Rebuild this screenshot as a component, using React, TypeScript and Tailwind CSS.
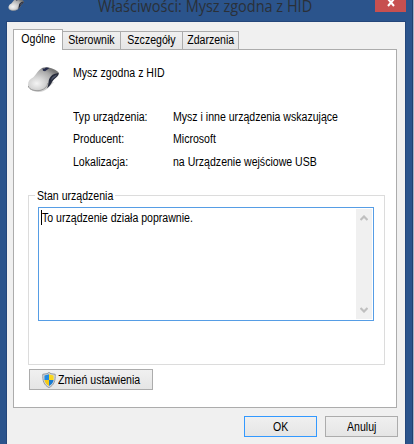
import React from 'react';

const tabs = [
  { name: 'Sterownik', className: 'w-[58px]' },
  { name: 'Szczegóły', className: 'w-[62px]' },
  { name: 'Zdarzenia', className: 'w-[56px]' },
];

const details = [
  { label: 'Typ urządzenia:', value: 'Mysz i inne urządzenia wskazujące', className: 'h-[22px]' },
  { label: 'Producent:', value: 'Microsoft', className: 'h-[23px]' },
  { label: 'Lokalizacja:', value: 'na Urządzenie wejściowe USB', className: 'h-[22px]' },
];

const MouseIcon = ({ className }: { className?: string }) => (
  <svg viewBox="0 0 34 28" className={className}>
    <defs>
      <radialGradient id="mouseBody" cx="0.28" cy="0.68" r="0.75">
        <stop offset="0" stopColor="#f4f4f4" />
        <stop offset="0.35" stopColor="#d4d4d4" />
        <stop offset="0.75" stopColor="#a9a9a9" />
        <stop offset="1" stopColor="#777" />
      </radialGradient>
    </defs>
    <path d="M3 24C8 28 15 28 20 24L27 17L16 18Z" fill="#777" opacity="0.35" />
    <path d="M1 20C1 16 3 14 6 12.5C9 10 11 5 15 3C20 1 29 4 32 8C32 12 27 13 25 17C23 22 18 26 10 26C5 26 1 24 1 20Z" fill="url(#mouseBody)" />
    <path d="M1.3 21C2 25 9 26.5 14 25.2C18 24 20.5 21 20.8 18" fill="none" stroke="#8f8f8f" strokeWidth="0.8" />
    <path d="M31.5 8C31.5 12 27 13 25 17C24 19.5 22 22 20 23.2C22.5 18 20.5 15 24 11.2C26 9 28.5 8.5 31.5 8Z" fill="#262b3b" />
    <path d="M27 11L30 9.5C29 12 26 13 24.5 15.5C23.8 14 25 12 27 11Z" fill="#535a6d" />
    <path d="M15.5 3.2L17.2 3.8L19 2.6L22.5 3L18 6.2L16 5.8Z" fill="#252b4b" />
  </svg>
);

const ShieldIcon = () => (
  <svg viewBox="0 0 14 16" className="w-[14px] h-4 shrink-0">
    <path d="M7 .5L9 1.7L13.2 2.3C13.5 8.5 12.2 13 7 15.6C1.8 13 .5 8.5 .8 2.3L5 1.7Z" fill="#d7dadd" stroke="#92979c" />
    <path d="M7 2.2L2.4 3.6V8H7Z" fill="#238ae0" />
    <path d="M7 2.2L11.6 3.6V8H7Z" fill="#f9d71c" />
    <path d="M2.4 8H7V14C4.2 12.5 2.8 10.7 2.4 8Z" fill="#f4ca16" />
    <path d="M7 8H11.6C11.2 10.7 9.8 12.5 7 14Z" fill="#187bd2" />
  </svg>
);

const Chevron = ({ className }: { className?: string }) => (
  <svg viewBox="0 0 8 6" className={`w-2 h-1.5 ${className ?? ''}`}>
    <path d="M.5 5L4 1.5L7.5 5" fill="none" stroke="#bfbfbf" strokeWidth="2.2" />
  </svg>
);

// Condensed dialog text
const Label = ({ children, center }: { children: React.ReactNode; center?: boolean }) => (
  <span className={`inline-block whitespace-nowrap scale-x-[0.88] ${center ? 'origin-center' : 'origin-left'}`}>{children}</span>
);

const App: React.FC = () => {
  return (
    <div className="w-[414px] h-[444px] overflow-hidden flex bg-[#a3b2c9] font-['Liberation_Sans',Arial,sans-serif] text-xs text-black">
      <div className="w-[413px] h-full flex flex-col bg-[#2b548c] border-r border-[#20406e]">
        {/* Title bar */}
        <div className="h-[21px] shrink-0 flex items-start relative">
          <MouseIcon className="w-[17px] h-[15px] ml-[8px] -mt-[3px]" />
          <h1 className="ml-[73px] leading-[13px] text-[15.5px] origin-left scale-x-[0.935] text-[#2a3038] whitespace-nowrap font-['Open_Sans','Noto_Sans',sans-serif]">
            Właściwości: Mysz zgodna z HID
          </h1>
          <button className="absolute left-[375px] top-0 w-[31px] h-3 bg-[#c75050] flex justify-center">
            <svg viewBox="0 0 8 7" className="w-2 h-[7px]">
              <path d="M1 -1L7 6M7 -1L1 6" stroke="white" strokeWidth="2" />
            </svg>
          </button>
        </div>

        {/* Dialog body */}
        <div className="ml-[6px] w-[400px] h-[423px] bg-[#f0f0f0] border border-b-0 border-[#24467a] px-[6px] pt-[7px]">
          <div className="flex items-end h-5">
            <button className="w-[50px] h-[21px] -mb-px z-10 bg-white border border-b-0 border-[#acacac] pb-[2px]"><Label center>Ogólne</Label></button>
            <div className="flex h-[18px]">
              {tabs.map((tab) => (
                <button key={tab.name} className={`${tab.className} h-[18px] flex justify-center border border-l-0 border-b-0 border-[#acacac] bg-linear-to-b from-[#f0f0f0] to-[#e5e5e5]`}>
                  <Label center>{tab.name}</Label>
                </button>
              ))}
            </div>
          </div>

          <div className="w-[384px] h-[359px] bg-white border border-[#acacac] px-[14px] flex flex-col items-start">
            <div className="h-[56px] flex items-start pt-[15px]">
              <MouseIcon className="w-[34px] h-[28px] -ml-px" />
              <p className="ml-[12px] leading-4"><Label>Mysz zgodna z HID</Label></p>
            </div>
            <div className="pl-[45px] pt-[3px] h-[89px]">
              {details.map((row) => (
                <div key={row.label} className={`flex leading-4 ${row.className}`}>
                  <div className="w-[100px]"><Label>{row.label}</Label></div>
                  <Label>{row.value}</Label>
                </div>
              ))}
            </div>

            <div className="w-[357px] h-[170px] border border-[#dcdcdc] flex flex-col items-start">
              <div className="h-[11px]">
                <div className="w-[80px] ml-[6px] -mt-[8px] px-[2px] bg-white leading-4"><Label>Stan urządzenia</Label></div>
              </div>
              <div className="ml-[9px] w-[336px] h-[114px] border border-[#569de5] flex justify-between p-px">
                <p className="border-l border-black h-[15px] leading-[17px] mt-px ml-px"><Label>To urządzenie działa poprawnie.</Label></p>
                <div className="w-4 bg-[#f0f0f0] flex flex-col items-center justify-between py-[6px]">
                  <Chevron />
                  <Chevron className="rotate-180" />
                </div>
              </div>
            </div>

            <button className="mt-1 ml-px w-[124px] h-[21px] border border-[#acacac] bg-linear-to-b from-[#f0f0f0] to-[#e5e5e5] flex items-center pl-3 gap-[2px]">
              <ShieldIcon />
              <Label>Zmień ustawienia</Label>
            </button>
          </div>

          <div className="flex justify-end gap-2 pt-2 -mr-px w-[385px]">
            <button className="w-[73px] h-[21px] border border-[#3399ff] bg-linear-to-b from-[#f0f0f0] to-[#e5e5e5]"><Label center>OK</Label></button>
            <button className="w-[73px] h-[21px] border border-[#acacac] bg-linear-to-b from-[#f0f0f0] to-[#e5e5e5]"><Label center>Anuluj</Label></button>
          </div>
        </div>
      </div>
    </div>
  );
};

export default App;
